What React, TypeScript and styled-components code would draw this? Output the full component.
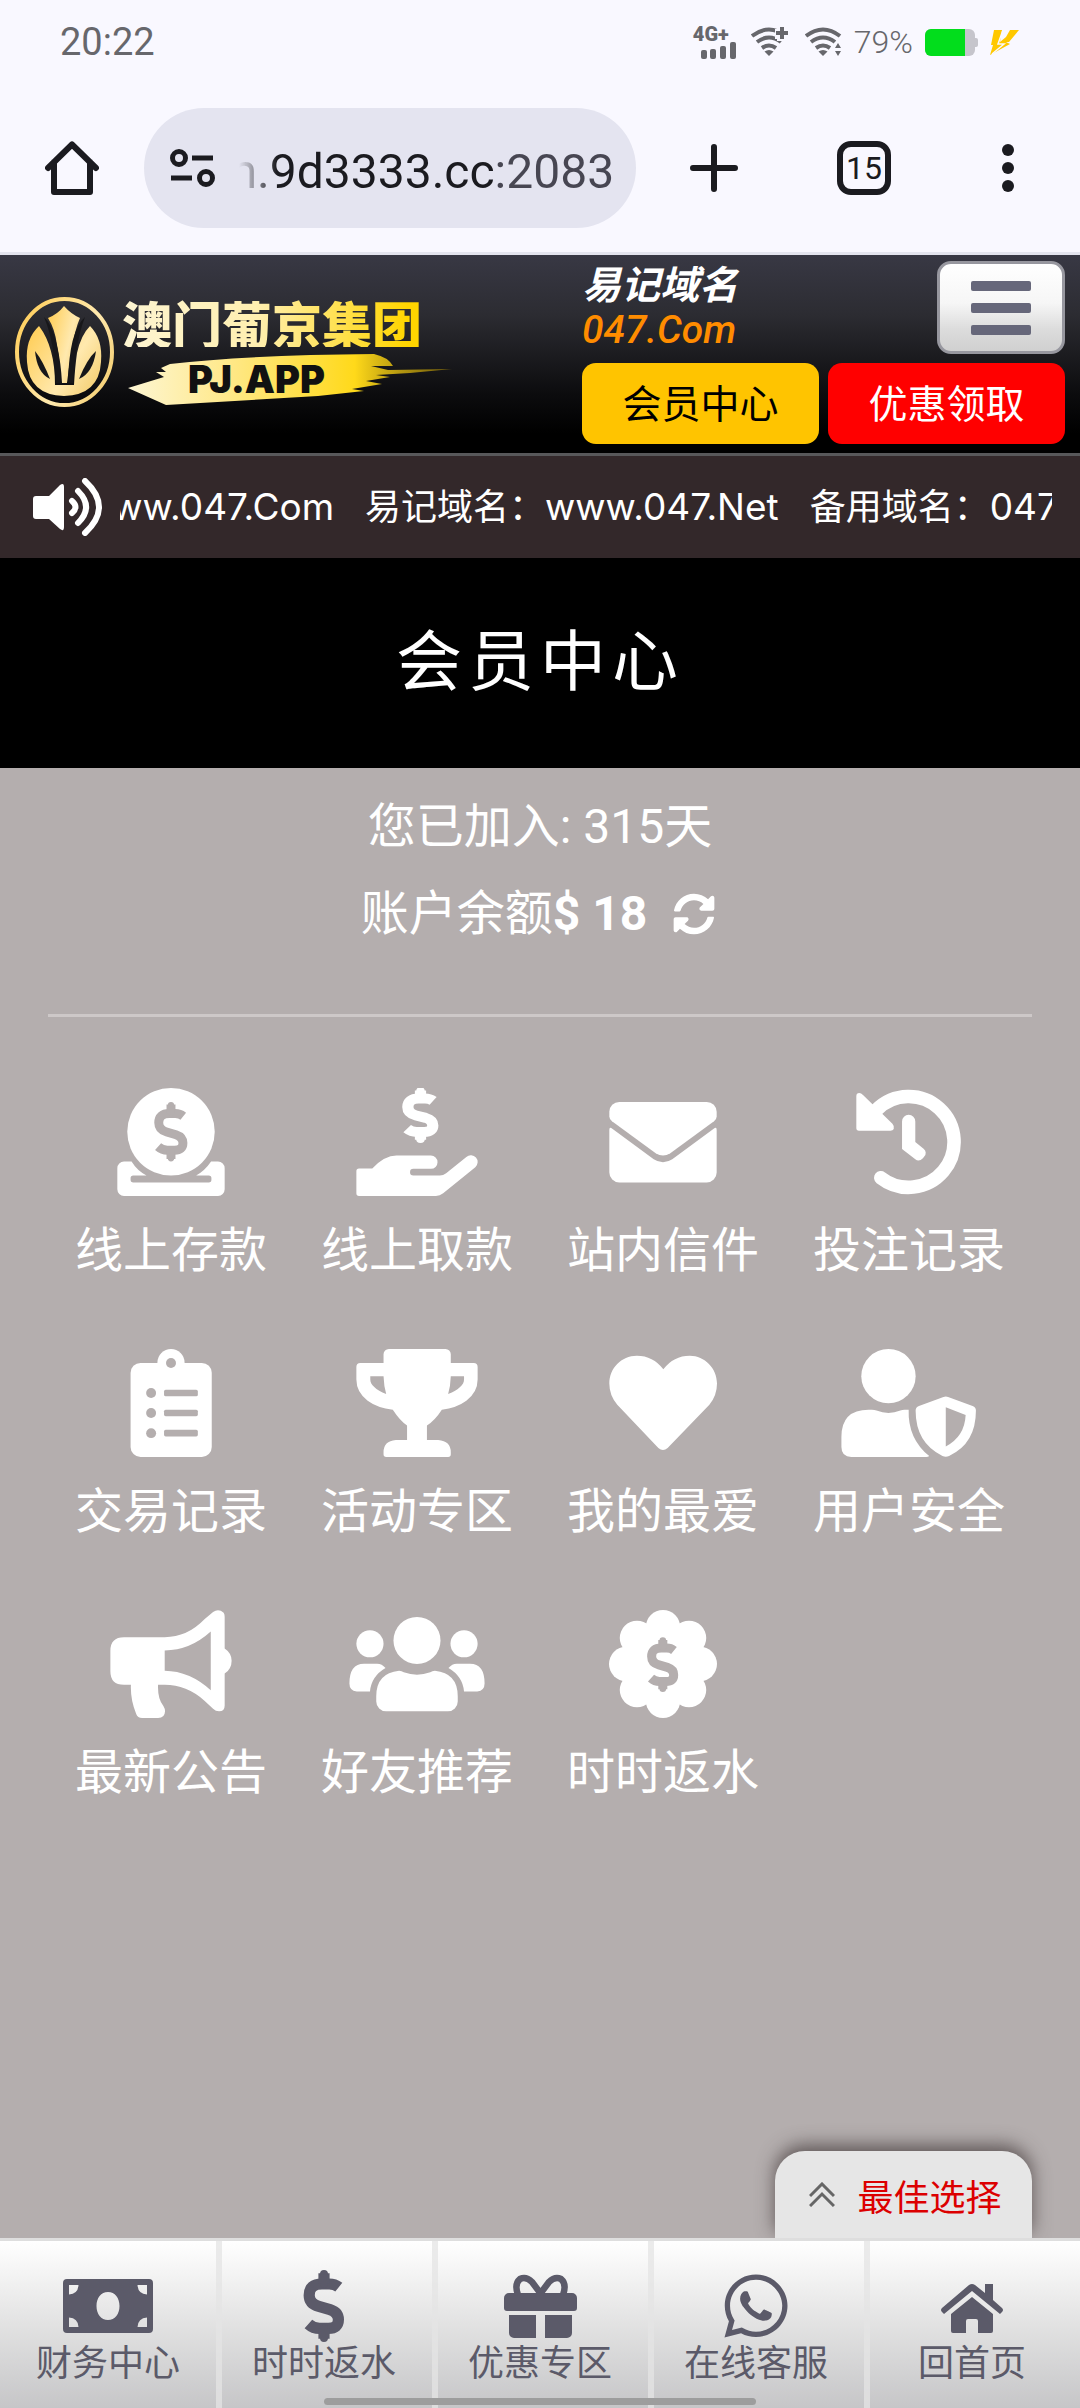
import React from 'react';
import styled, { createGlobalStyle, css } from 'styled-components';
import { FaSyncAlt, FaWhatsapp } from 'react-icons/fa';

const SANS = `Roboto, "Noto Sans CJK SC", sans-serif`;
const SITE = `Inter, "Noto Sans CJK SC", sans-serif`;
const INK = '#1b1b20';
const CANVAS = '#b4aeae';
const SLATE = '#5b5a69';

const Global = createGlobalStyle`
  * { box-sizing: border-box; }
  body { margin: 0; background: ${CANVAS}; font-family: ${SANS}; }
  button, input { font: inherit; }
  button { border: 0; padding: 0; background: none; cursor: pointer; }
  a { color: inherit; text-decoration: none; }
  h1, p { margin: 0; font-weight: 400; }
  svg { display: block; flex: none; }
`;

const Page = styled.div`
  display: flex;
  flex-direction: column;
  min-height: 100vh;
`;

/* ---------- system and browser bars ---------- */

const Chrome = styled.div`
  background: #f9f8ff;
  border-bottom: 3px solid #e4e4ee;
`;

const StatusBar = styled.div`
  display: flex;
  align-items: center;
  justify-content: space-between;
  height: 84px;
  padding: 0 61px 0 60px;
  color: #67676c;
`;

const Clock = styled.time`
  font-size: 38px;
`;

const StatusIcons = styled.div`
  display: flex;
  align-items: center;
  gap: 12px;
`;

const Signal = styled.div`
  display: flex;
  flex-direction: column;
  width: 46px;
  font-size: 20px;
  font-weight: 900;
  line-height: 16px;
  svg { align-self: flex-end; margin-right: 3px; }
`;

const Percent = styled.span`
  font-size: 32px;
  font-weight: 300;
`;

const Toolbar = styled.div`
  display: flex;
  align-items: center;
  height: 168px;
  padding: 0 6px 0 45px;
`;

const ToolButton = styled.button`
  display: flex;
  align-items: center;
  justify-content: center;
  flex: 0 0 ${(p: { $w: number }) => p.$w}px;
  height: 120px;
  color: ${INK};
`;

const Omnibox = styled.label`
  display: flex;
  align-items: center;
  flex: 1;
  min-width: 0;
  height: 120px;
  margin: 0 6px 0 45px;
  padding: 0 20px 0 26px;
  border-radius: 60px;
  background: #e4e4f0;
`;

const UrlInput = styled.input`
  flex: 1;
  min-width: 0;
  height: 68px;
  padding: 6px 0 0;
  border: 0;
  outline: 0;
  font-size: 48px;
  color: transparent;
  background: linear-gradient(90deg, transparent 24px, ${INK} 62px, ${INK} 281px, #474652 283px);
  -webkit-background-clip: text;
  background-clip: text;
`;

const TabCount = styled.span`
  display: grid;
  place-items: center;
  width: 54px;
  height: 54px;
  border: 6px solid ${INK};
  border-radius: 14px;
  font-size: 32px;
  line-height: 40px;
`;

/* ---------- site header ---------- */

const Header = styled.header`
  display: flex;
  justify-content: space-between;
  padding: 6px 15px 9px;
  border-bottom: 3px solid #58585a;
  background: linear-gradient(#383844, #2c2c32 30%, #0c0c0e 70%, #000 90%);
`;

const Logo = styled.a`
  display: flex;
  align-items: center;
  gap: 8px;
  padding-bottom: 1px;
`;

const LogoText = styled.span`
  display: flex;
  flex-direction: column;
  gap: 6px;
`;

const LogoName = styled.span`
  font-family: "Noto Sans CJK SC", sans-serif;
  font-size: 50px;
  font-weight: 900;
  line-height: 50px;
  color: transparent;
  background: linear-gradient(90deg, #fdf5d2, #ffefb0 45%, #ffd500 95%);
  -webkit-background-clip: text;
  background-clip: text;
`;

const Brush = styled.span`
  position: relative;
  display: block;
  height: 54px;
  padding-left: 66px;
  font-family: Inter, sans-serif;
  font-size: 38px;
  font-weight: 900;
  line-height: 52px;
  color: #111;
  span { position: relative; }
  svg { position: absolute; left: 6px; top: 0; }
`;

const HeaderSide = styled.div`
  display: grid;
  grid-template-columns: 237px 237px;
  gap: 9px;
`;

const Domain = styled.p`
  padding-top: 3px;
  font-size: 39px;
  font-weight: 700;
  font-style: italic;
  line-height: 44px;
  color: #fff;
  em { display: block; font-weight: 500; color: #ff8c00; }
`;

const MenuButton = styled.button`
  display: flex;
  flex-direction: column;
  align-items: center;
  justify-content: center;
  gap: 12px;
  justify-self: end;
  width: 128px;
  height: 93px;
  border: 3px solid #97979f;
  border-radius: 14px;
  background: linear-gradient(#fff, #f6f6f6 45%, #dcdcdc 75%, #d0d0d0);
`;

const MenuBar = styled.span`
  width: 60px;
  height: 10px;
  border-radius: 2px;
  background: #66677a;
`;

const Pill = styled.a<{ $hot?: boolean }>`
  display: flex;
  align-items: center;
  justify-content: center;
  height: 81px;
  padding-bottom: 5px;
  border-radius: 14px;
  font-size: 39px;
  color: ${(p) => (p.$hot ? '#fff' : '#000')};
  background: ${(p) => (p.$hot ? '#ff0000' : '#ffc400')};
`;

const Ticker = styled.div`
  display: flex;
  align-items: center;
  gap: 18px;
  height: 102px;
  padding: 0 28px 0 33px;
  background: #33282a;
  color: #fff;
`;

const TickerWindow = styled.div`
  flex: 1;
  min-width: 0;
  overflow: hidden;
`;

const TickerTrack = styled.div`
  display: flex;
  gap: 31px;
  width: max-content;
  margin-left: -38px;
  font-family: ${SITE};
  font-size: 36px;
  line-height: 54px;
  white-space: nowrap;
`;

const Host = styled.span`
  font-size: 37px;
`;

/* ---------- member centre ---------- */

const Title = styled.h1`
  height: 210px;
  background: #000;
  color: #fff;
  font-size: 66px;
  line-height: 210px;
  letter-spacing: 6px;
  text-align: center;
`;

const Main = styled.main`
  flex: 1;
  padding: 15px 48px 0;
  color: #fff;
`;

const Stats = styled.section`
  padding-bottom: 57px;
  border-bottom: 3px solid #cdc8c8;
  font-size: 48px;
  line-height: 87px;
  text-align: center;
`;

const Balance = styled.p`
  display: flex;
  align-items: center;
  justify-content: center;
  padding-right: 4px;
`;

const Refresh = styled.button`
  margin-left: 26px;
  color: #fff;
  font-size: 42px;
`;

const Menu = styled.nav`
  display: grid;
  grid-template-columns: repeat(4, 1fr);
  row-gap: 58px;
  padding-top: 71px;
`;

const MenuLink = styled.a`
  display: flex;
  flex-direction: column;
  align-items: center;
  gap: 15px;
  font-size: 48px;
  line-height: 80px;
  svg { height: 108px; fill: #fff; }
`;

/* ---------- bottom bar ---------- */

const Footer = styled.footer`
  position: relative;
`;

const BestPick = styled.button`
  position: absolute;
  right: 48px;
  bottom: 100%;
  display: flex;
  align-items: center;
  justify-content: center;
  gap: 22px;
  width: 257px;
  height: 87px;
  padding-left: 4px;
  border-radius: 30px 30px 0 0;
  background: #e6e6e6;
  box-shadow: 0 -6px 18px rgba(60, 50, 50, 0.7);
  clip-path: inset(-40px -40px 0 -40px);
  font-size: 36px;
  color: #dc0000;
`;

const TabBar = styled.nav`
  display: grid;
  grid-template-columns: repeat(5, 1fr);
  height: 170px;
  border-top: 3px solid #dedede;
  background: linear-gradient(#fff, #e2e2e2 50%, #c6c6c8);
`;

const Tab = styled.a<{ $first: boolean }>`
  display: flex;
  flex-direction: column;
  align-items: center;
  color: ${SLATE};
  font-size: 36px;
  line-height: 48px;
  ${(p) =>
    !p.$first &&
    css`
      border-left: 6px solid rgba(228, 228, 228, 0.75);
      padding-right: 6px;
    `}
`;

const TabIcon = styled.span`
  display: grid;
  align-items: center;
  justify-items: center;
  height: 101px;
  margin-bottom: -2px;
  padding-top: 29px;
`;

const GestureBar = styled.div`
  position: absolute;
  left: 30%;
  right: 30%;
  bottom: 3px;
  height: 7px;
  border-radius: 4px;
  background: #9d9d9d;
`;

/* ---------- drawings ---------- */

const Dollar = ({ color, weight = 27 }: { color: string; weight?: number }) => (
  <g fill="none" stroke={color}>
    <path
      strokeWidth={weight}
      d="M88 43Q78 35 64 35H46Q14 35 14 63Q14 84 38 91L66 99Q87 106 87 124Q87 146 62 146H40Q24 146 12 135"
    />
    <path strokeWidth={weight} d="M51 8V34M51 147V172" />
    <path strokeWidth={weight - 8} strokeLinecap="round" d="M51 10V34M51 147V170" />
  </g>
);

const Art = ({ w, children }: { w: number; children: React.ReactNode }) => (
  <svg viewBox={`0 0 ${w} 326`} width={w / 3} height="108" aria-hidden="true">
    {children}
  </svg>
);

const items: { label: string; art: React.ReactNode }[] = [
  {
    label: '线上存款',
    art: (
      <Art w={324}>
        <circle cx="162" cy="132" r="132" />
        <g transform="translate(111 42)"><Dollar color={CANVAS} /></g>
        <path d="M20 222H43Q60 250 88 264H48q-8 0-8 8v5q0 8 8 8h228q8 0 8-8v-5q0-8-8-8H238Q264 250 283 222H304a20 20 0 0 1 20 20V306a20 20 0 0 1-20 20H20a20 20 0 0 1-20-20V242a20 20 0 0 1 20-20Z" />
      </Art>
    ),
  },
  {
    label: '线上取款',
    art: (
      <Art w={366}>
        <g transform="translate(141 0) scale(1.03 .91)"><Dollar color="#fff" weight={33} /></g>
        <path d="M8 243H48Q85 204 121 204H225a20 20 0 0 1 0 40H172a10 10 0 0 0 0 20H252Q262 264 271 257L332 208a20 20 0 0 1 27 31L262 318Q252 326 240 326H8a8 8 0 0 1-8-8V251a8 8 0 0 1 8-8Z" />
      </Art>
    ),
  },
  {
    label: '站内信件',
    art: (
      <Art w={324}>
        <path d="M30 42H294a30 30 0 0 1 30 30V86Q324 94 316 100L184 197Q162 211 140 197L8 100Q0 94 0 86V72a30 30 0 0 1 30-30Z" />
        <path d="M0 126Q0 116 9 123L134 215Q162 233 190 215L315 123Q324 116 324 126V255a30 30 0 0 1-30 30H30a30 30 0 0 1-30-30Z" />
      </Art>
    ),
  },
  {
    label: '投注记录',
    art: (
      <Art w={324}>
        <path d="M64 66A137 137 0 1 1 77 271" fill="none" stroke="#fff" strokeWidth="41" strokeLinecap="round" />
        <path d="M3 25Q3 15 12 15Q17 15 24 22L112 108Q119 116 116 124Q113 129 106 129H11Q3 129 3 121Z" />
        <path d="M141 101a20 20 0 0 1 40 0V163L206 183Q218 194 208 207L204 212Q192 224 181 215L141 184Z" />
      </Art>
    ),
  },
  {
    label: '交易记录',
    art: (
      <Art w={324}>
        <rect x="40" y="42" width="245" height="284" rx="30" />
        <circle cx="162" cy="41" r="41" />
        <g fill={CANVAS}>
          <circle cx="162" cy="42" r="15" />
          {[133, 193, 254].map((y) => (
            <React.Fragment key={y}>
              <circle cx="102" cy={y} r="15" />
              <rect x="141" y={y - 10} width="102" height="20" rx="5" />
            </React.Fragment>
          ))}
        </g>
      </Art>
    ),
  },
  {
    label: '活动专区',
    art: (
      <Art w={366}>
        <path
          fillRule="evenodd"
          d="M98 0H269a16 16 0 0 1 16 16V42H354a12 12 0 0 1 12 12V92Q366 130 332 156Q302 178 258 183Q238 214 213 231V275H247Q285 278 285 312V318a8 8 0 0 1-8 8H90a8 8 0 0 1-8-8V312Q82 278 119 275H153V231Q130 214 110 183Q64 178 34 156Q0 130 0 92V54a12 12 0 0 1 12-12H82V16A16 16 0 0 1 98 0ZM42 82H82Q83 112 90 136Q42 116 42 92ZM325 82H285Q284 112 277 136Q325 116 325 92Z"
        />
      </Art>
    ),
  },
  {
    label: '我的最爱',
    art: (
      <Art w={324}>
        <path d="M163 61Q132 20 83 20C36 20 0 58 0 104Q0 140 24 168L148 299Q162 311 176 299L302 168Q325 140 325 104C325 58 288 20 243 20Q194 20 163 61Z" />
      </Art>
    ),
  },
  {
    label: '用户安全',
    art: (
      <Art w={408}>
        <circle cx="142" cy="82" r="82" />
        <path d="M82 183H92Q100 183 106 186Q142 200 178 186Q184 183 190 183H203Q200 270 265 323Q262 326 256 326H30Q0 326 0 296V265Q0 183 82 183Z" />
        <path
          fillRule="evenodd"
          d="M308 145Q315 142 322 145L396 172Q406 176 406 186Q406 286 325 323Q315 328 305 323Q224 284 224 186Q224 176 234 172ZM315 176L375 199Q372 264 315 294Z"
        />
      </Art>
    ),
  },
  {
    label: '最新公告',
    art: (
      <Art w={366}>
        <path
          fillRule="evenodd"
          d="M41 82H164Q232 82 284 28L310 6Q326-6 342 8Q345 12 345 20V116Q366 130 366 153Q366 178 345 192V288Q345 306 328 306Q318 306 310 298L284 274Q230 226 164 226H144Q142 268 160 290Q170 306 160 320Q154 326 144 326H96Q82 326 78 314Q60 270 62 226H41Q0 226 0 185V123Q0 82 41 82ZM164 122V183Q240 184 303 242V65Q240 122 164 122Z"
        />
      </Art>
    ),
  },
  {
    label: '好友推荐',
    art: (
      <Art w={408}>
        <circle cx="204" cy="92" r="71" />
        <circle cx="62" cy="102" r="41" />
        <circle cx="346" cy="102" r="41" />
        <path d="M150 183Q158 183 164 188Q204 203 244 188Q250 183 258 183Q327 190 327 260V276a30 30 0 0 1-30 30H111a30 30 0 0 1-30-30V260Q81 190 150 183Z" />
        <path d="M44 162H84Q98 162 109 175Q66 200 62 246H22Q0 244 0 222Q0 162 44 162Z" />
        <path transform="translate(408) scale(-1 1)" d="M44 162H84Q98 162 109 175Q66 200 62 246H22Q0 244 0 222Q0 162 44 162Z" />
      </Art>
    ),
  },
  {
    label: '时时返水',
    art: (
      <Art w={324}>
        <circle cx="162" cy="163" r="122" />
        {[0, 1, 2, 3, 4, 5, 6, 7].map((k) => (
          <circle key={k} cx="162" cy="52" r="52" transform={`rotate(${k * 45} 162 163)`} />
        ))}
        <g transform="translate(115 83) scale(.91)"><Dollar color={CANVAS} weight={30} /></g>
      </Art>
    ),
  },
];

const tabs: { label: string; art: React.ReactNode }[] = [
  {
    label: '财务中心',
    art: (
      <svg width="90" height="54" viewBox="0 0 90 54" fill="currentColor">
        <path
          fillRule="evenodd"
          d="M4 0H86a4 4 0 0 1 4 4V50a4 4 0 0 1-4 4H4a4 4 0 0 1-4-4V4a4 4 0 0 1 4-4ZM6 6V15.500Q15 15 15.500 6ZM84 6H74.500Q75 15 84 15.500ZM6 48H15.500Q15 39 6 38.500ZM84 48V38.500Q75 39 74.500 48ZM45 13C38 13 33.500 19 33.500 27S38 41 45 41S56.500 35 56.500 27S52 13 45 13Z"
        />
      </svg>
    ),
  },
  {
    label: '时时返水',
    art: (
      <svg width="42" height="72" viewBox="0 0 102 180">
        <Dollar color={SLATE} weight={28} />
      </svg>
    ),
  },
  {
    label: '优惠专区',
    art: (
      <svg width="73" height="64" viewBox="0 0 73 64" fill="currentColor">
        <path d="M5 19H68a5 5 0 0 1 5 5V34a3 3 0 0 1-3 3H3a3 3 0 0 1-3-3V24a5 5 0 0 1 5-5ZM5 41H32V64H10a5 5 0 0 1-5-5ZM41 41H68V59a5 5 0 0 1-5 5H41Z" />
        <path
          d="M37 20L28 8Q22 2 16 5Q10 10 14 21M36 20L45 8Q51 2 57 5Q63 10 59 21"
          fill="none"
          stroke="currentColor"
          strokeWidth="6.500"
        />
      </svg>
    ),
  },
  { label: '在线客服', art: <FaWhatsapp size={72} /> },
  {
    label: '回首页',
    art: (
      <svg width="62" height="44" viewBox="0 0 62 44" fill="currentColor" overflow="visible">
        <path d="M28 1Q31-1 34 1L44 9V0H52V16L61 24Q63 26 61 28L59 30L31 7L3 30L1 28Q-1 26 1 24Z" />
        <path d="M31 13L52 30V47Q52 49 50 49H37V37Q37 35 35 35H27Q25 35 25 37V49H12Q10 49 10 47V30Z" />
      </svg>
    ),
  },
];

const WifiArcs = () => (
  <g fill="none" stroke="currentColor" strokeWidth="4">
    <path d="M1 9Q18-4 35 9" />
    <path d="M6 15Q18 6 30 15" />
    <path d="M11 21Q18 16 25 21" />
    <path d="M13.500 24.500Q18 21.500 22.500 24.500L18 29Z" fill="currentColor" stroke="none" />
  </g>
);

const Emblem = () => (
  <svg width="99" height="110" viewBox="0 0 99 110" aria-hidden="true">
    <defs>
      <linearGradient id="gold" x1="0" x2="1" y1="0.200" y2="0.800">
        <stop offset="0" stopColor="#ffcf5c" />
        <stop offset=".6" stopColor="#ffe9ae" />
        <stop offset="1" stopColor="#f5cf72" />
      </linearGradient>
    </defs>
    <ellipse cx="49.500" cy="55" rx="47.500" ry="53" fill="none" stroke="url(#gold)" strokeWidth="4" />
    <g fill="url(#gold)">
      <path d="M49 9Q56 17 65 21Q60 32 57 52Q54 68 52 86H47Q46 66 42 48Q40 32 33 21Q43 17 49 9Z" />
      <path d="M24 29Q10 42 12 65Q14 98 49 99Q84 98 86 65Q88 42 75 29Q66 38 62 56Q60 70 59 88H40Q40 50 24 29Z" />
    </g>
    <g fill="#17171a">
      <path d="M20 54Q28 64 35 82Q22 76 20 54Z" />
      <path d="M81 54Q72 62 64 82Q78 76 81 54Z" />
      <path d="M29 20Q44 34 46 86H41Q40 46 29 20Z" />
      <path d="M70 20Q54 34 53 86H58Q60 46 70 20Z" />
    </g>
  </svg>
);

const BrushStroke = () => (
  <svg width="324" height="54" viewBox="0 0 324 54" aria-hidden="true">
    <defs>
      <linearGradient id="paint">
        <stop offset="0" stopColor="#fdf6d4" />
        <stop offset=".3" stopColor="#ffe98c" />
        <stop offset=".7" stopColor="#ffd91a" />
        <stop offset="1" stopColor="#c9a200" stopOpacity=".5" />
      </linearGradient>
    </defs>
    <path
      fill="url(#paint)"
      d="M0 35L36 24L28 19H38L33 15L42 11Q120 2 246 1Q260 4 265 13H243L260 17L324 16L282 20L248 22L262 24L238 28L254 31L224 36L236 38L190 43L38 52Z"
    />
  </svg>
);

export default function App() {
  return (
    <Page>
      <Global />
      <Chrome>
        <StatusBar>
          <Clock>20:22</Clock>
          <StatusIcons>
            <Signal>
              4G+
              <svg width="35" height="17" viewBox="0 0 35 17" fill="currentColor">
                <rect x="0" y="8" width="6" height="9" rx="2" />
                <rect x="9" y="7" width="6" height="10" rx="2" />
                <rect x="19" y="4" width="6" height="13" rx="2" />
                <rect x="29" y="0" width="6" height="17" rx="2" />
              </svg>
            </Signal>
            <svg width="42" height="30" viewBox="0 0 42 30">
              <WifiArcs />
              <path d="M24 7H38M31 0V14" stroke="#f9f8ff" strokeWidth="10" />
              <path d="M25 6H37M31 0V12" stroke="currentColor" strokeWidth="4" />
            </svg>
            <svg width="37" height="30" viewBox="0 0 37 30">
              <WifiArcs />
              <path d="M29 22V16L33 14L37 16V28H29Z" fill="#f9f8ff" />
              <path d="M33 16L36 21H30ZM33 29L36 24H30Z" fill="currentColor" />
            </svg>
            <Percent>79%</Percent>
            <svg width="53" height="27" viewBox="0 0 53 27">
              <rect width="50" height="27" rx="6" fill="#c6c5cc" />
              <rect x="48" y="9" width="5" height="9" rx="2" fill="#c6c5cc" />
              <path d="M6 0H40V27H6a6 6 0 0 1-6-6V6a6 6 0 0 1 6-6Z" fill="#02dd1c" />
            </svg>
            <svg width="29" height="25" viewBox="0 0 29 25" fill="#ffc800">
              <path d="M4 0H12L10 12L16 7L20 0H29L19 12H16L20 14L0 25L3 15H1Z" />
              <path d="M13 0L8 14H14L2 24" fill="none" stroke="#f9f8ff" strokeWidth="1.500" />
            </svg>
          </StatusIcons>
        </StatusBar>
        <Toolbar>
          <ToolButton $w={54} aria-label="Home">
            <svg width="54" height="54" viewBox="0 0 54 54" fill="none" stroke="currentColor" strokeWidth="6" strokeLinejoin="round" strokeLinecap="round">
              <path d="M3 27L27 3.500L51 27M9 21V51H45V21" />
            </svg>
          </ToolButton>
          <Omnibox>
            <svg width="45" height="38" viewBox="0 0 45 38" fill="none" stroke={INK} strokeWidth="5">
              <circle cx="9" cy="9" r="6.500" />
              <circle cx="36" cy="29" r="6.500" />
              <path d="M22 9H43M1 29H22" />
            </svg>
            <UrlInput aria-label="Address" defaultValue="m.9d3333.cc:2083" />
          </Omnibox>
          <ToolButton $w={144} aria-label="New tab">
            <svg width="48" height="48" viewBox="0 0 48 48" stroke="currentColor" strokeWidth="6" strokeLinecap="round">
              <path d="M3 24H45M24 3V45" />
            </svg>
          </ToolButton>
          <ToolButton $w={156} aria-label="Tabs">
            <TabCount>15</TabCount>
          </ToolButton>
          <ToolButton $w={132} aria-label="More">
            <svg width="12" height="48" viewBox="0 0 12 48" fill="currentColor">
              <circle cx="6" cy="6" r="6" />
              <circle cx="6" cy="24" r="6" />
              <circle cx="6" cy="42" r="6" />
            </svg>
          </ToolButton>
        </Toolbar>
      </Chrome>

      <Header>
        <Logo href="#">
          <Emblem />
          <LogoText>
            <LogoName>澳门葡京集团</LogoName>
            <Brush>
              <BrushStroke />
              <span>PJ.APP</span>
            </Brush>
          </LogoText>
        </Logo>
        <HeaderSide>
          <Domain>
            易记域名<em>047.Com</em>
          </Domain>
          <MenuButton aria-label="菜单">
            <MenuBar />
            <MenuBar />
            <MenuBar />
          </MenuButton>
          <Pill href="#">会员中心</Pill>
          <Pill href="#" $hot>优惠领取</Pill>
        </HeaderSide>
      </Header>

      <Ticker>
        <svg width="69" height="58" viewBox="0 0 69 58" fill="none" stroke="#fff" strokeWidth="6" strokeLinecap="round" aria-hidden="true">
          <path stroke="none" fill="#fff" d="M3 18H16L27 7Q31 4 31 9V49Q31 54 27 51L16 41H3Q0 41 0 38V21Q0 18 3 18Z" />
          <path d="M39 23Q46 29 39 35M45 13Q61 29 45 45M52 3Q80 29 52 55" />
        </svg>
        <TickerWindow>
          <TickerTrack>
            <Host>www.047.Com</Host>
            <span>易记域名：<Host>www.047.Net</Host></span>
            <span>备用域名：<Host>047.Com</Host></span>
          </TickerTrack>
        </TickerWindow>
      </Ticker>

      <Title>会员中心</Title>

      <Main>
        <Stats>
          <p>您已加入: 315天</p>
          <Balance>
            账户余额<b>$ 18</b>
            <Refresh aria-label="刷新余额">
              <FaSyncAlt />
            </Refresh>
          </Balance>
        </Stats>
        <Menu>
          {items.map((item) => (
            <MenuLink href="#" key={item.label}>
              {item.art}
              {item.label}
            </MenuLink>
          ))}
        </Menu>
      </Main>

      <Footer>
        <BestPick>
          <svg width="26" height="25" viewBox="0 0 26 25" fill="none" stroke="#666" strokeWidth="3">
            <path d="M1 14L13 2L25 14M1 24L13 12L25 24" />
          </svg>
          最佳选择
        </BestPick>
        <TabBar>
          {tabs.map((tab, i) => (
            <Tab href="#" key={tab.label} $first={i === 0}>
              <TabIcon>{tab.art}</TabIcon>
              {tab.label}
            </Tab>
          ))}
        </TabBar>
        <GestureBar />
      </Footer>
    </Page>
  );
}
